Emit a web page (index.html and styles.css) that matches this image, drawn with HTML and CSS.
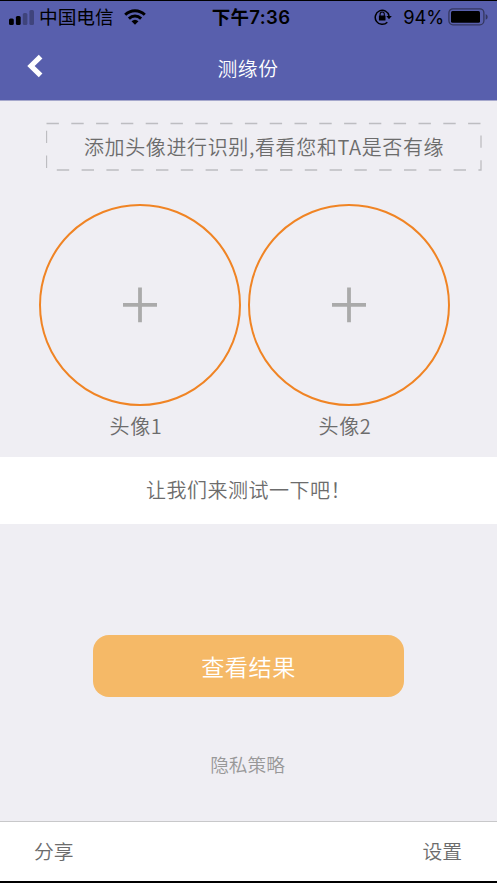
FILE: index.html
```html
<!DOCTYPE html>
<html lang="zh-CN">
<head>
<meta charset="utf-8">
<title>测缘份</title>
<link rel="stylesheet" href="styles.css">
</head>
<body>
<div class="screen">
  <header class="header">
    <div class="status">
      <div class="carrier">
        <svg class="signal" width="26" height="17" viewBox="0 0 26 17"><rect x="0" y="9.5" width="4.8" height="6.5" rx="1.5"/><rect x="6.9" y="7" width="4.8" height="9" rx="1.5"/><g opacity=".28"><rect x="13.8" y="4" width="4.6" height="12" rx="1.5"/><rect x="20.4" y="1" width="4.6" height="15" rx="1.5"/></g></svg>
        <span class="carrier-name">中国电信</span>
        <svg class="wifi" width="22" height="16" viewBox="0 0 22 16"><g fill="none" stroke="#000" stroke-width="2.9"><path d="M1.2 5.8C6.7.3 15.3.3 20.8 5.8"/><path d="M4.9 9.6C8.4 6.2 13.6 6.2 17.1 9.6"/></g><path d="M7.5 12.3Q11 9.2 14.5 12.3L11 15.8Z"/></svg>
      </div>
      <span class="time">下午7:36</span>
      <div class="power">
        <svg class="lock" width="18" height="18" viewBox="0 0 18 18"><path d="M13.3 14.2A7 7 0 1 1 15.1 8" fill="none" stroke="#000" stroke-width="1.5"/><path d="M12.3 7.9H17.8L15 11.2Z"/><rect x="4.9" y="7.5" width="6.6" height="5.1" rx=".6"/><path d="M6.1 8V6.1a2.1 2.1 0 0 1 4.2 0V8" fill="none" stroke="#000" stroke-width="1.1"/></svg>
        <span class="percent">94%</span>
        <svg class="battery" width="41" height="18" viewBox="0 0 41 18"><rect x=".9" y=".9" width="35" height="15.9" rx="4" fill="none" stroke="#34375f" stroke-width="1.3"/><rect x="3" y="3" width="29" height="11.8" rx="1.5"/><path d="M37.7 6.1Q39.7 7 39.7 8.9T37.7 11.7Z" fill="#34375f"/></svg>
      </div>
    </div>
    <nav class="nav">
      <svg class="back" width="16" height="24" viewBox="0 0 16 24"><path d="M13.6 2.6L4 12L13.6 21.4" fill="none" stroke="#fff" stroke-width="5.2"/></svg>
      <h1 class="title">测缘份</h1>
    </nav>
  </header>
  <main class="main">
    <div class="hint">
      <svg class="hint-frame" width="436" height="49" viewBox="0 0 436 49"><path d="M.5 1.5H435V48H.5Z" fill="none" stroke="#bdbdc1" stroke-width="1.3" stroke-dasharray="12.4 12.4"/></svg>
      <p class="hint-text">添加头像进行识别,看看您和TA是否有缘</p>
    </div>
    <div class="avatars">
      <div class="avatar">
        <div class="circle"><svg width="36" height="36" viewBox="0 0 36 36"><path d="M1 17.9H35M18 .5V35.3" stroke="#aaa" stroke-width="3.8"/></svg></div>
        <span class="label">头像1</span>
      </div>
      <div class="avatar">
        <div class="circle"><svg width="36" height="36" viewBox="0 0 36 36"><path d="M1 17.9H35M18 .5V35.3" stroke="#aaa" stroke-width="3.8"/></svg></div>
        <span class="label">头像2</span>
      </div>
    </div>
    <p class="message">让我们来测试一下吧！</p>
    <button class="submit">查看结果</button>
    <a class="privacy">隐私策略</a>
  </main>
  <footer class="toolbar"><span>分享</span><span>设置</span></footer>
</div>
</body>
</html>
```
FILE: styles.css
```css
* { box-sizing: border-box; margin: 0; padding: 0; }
body {
  background: #efeef3;
  color: #6c6c6c;
  font-family: "Noto Sans CJK SC", sans-serif;
  font-weight: 350;
}
svg { display: block; flex: none; }
.screen {
  width: 497px;
  height: 883px;
  display: flex;
  flex-direction: column;
  border-top: 1px solid #000;
  border-bottom: 2px solid #000;
  overflow: hidden;
}
.header { height: 100px; flex: none; background: #585fad; border-bottom: 1px solid #a6a8cc; }
.status {
  height: 32px;
  display: grid;
  grid-template-columns: 1fr auto 1fr;
  align-items: center;
  padding: 0 8px 0 9px;
  color: #000;
  line-height: 32px;
}
.carrier, .power { display: flex; align-items: center; }
.power { justify-content: flex-end; }
.carrier-name { margin: -2px 0 0 4px; font-size: 18.7px; font-weight: 400; }
.wifi { margin-left: 10px; }
.time { margin: 0 -2px 0 2px; font-family: Inter, "Noto Sans CJK SC", sans-serif; font-size: 18.5px; font-weight: 600; letter-spacing: .35px; }
.percent { margin: 0 4px 0 11px; font-family: Inter, sans-serif; font-size: 18.3px; font-weight: 400; letter-spacing: -.1px; }
.nav { height: 67px; display: grid; grid-template-columns: 1fr auto 1fr; align-items: center; padding-left: 27px; }
.back { margin-bottom: 1px; }
.title { font-size: 19.8px; font-weight: 350; letter-spacing: .5px; line-height: 30px; color: #fff; margin: 2px 0 0 -28px; }
.main { flex: 1; display: flex; flex-direction: column; }
.hint { position: relative; width: 436px; height: 49px; margin: 21px 0 0 46px; }
.hint-frame { position: absolute; inset: 0; }
.hint-text { padding-left: 38px; font-size: 20px; line-height: 49px; letter-spacing: .62px; white-space: nowrap; }
.avatars { display: flex; gap: 7px; margin: 33px 0 0 39px; }
.avatar { width: 202px; display: flex; flex-direction: column; align-items: center; }
.circle {
  width: 202px;
  height: 202px;
  border: 2px solid #f08424;
  border-radius: 50%;
  display: flex;
  align-items: center;
  justify-content: center;
}
.label { margin: 5px 8px 0 0; font-size: 20px; line-height: 30px; letter-spacing: .6px; }
.message { height: 67px; margin-top: 16px; background: #fff; padding-left: 146px; font-size: 20px; line-height: 65px; letter-spacing: .5px; }
.submit {
  width: 311px;
  height: 62px;
  margin: 111px 0 0 93px;
  border: 0;
  border-radius: 16px;
  background: #f5b967;
  color: #fff;
  font: 350 23.2px/60px "Noto Sans CJK SC", sans-serif;
  letter-spacing: .5px;
}
.privacy { margin: 52px 2px 0 0; text-align: center; font-size: 18.7px; line-height: 30px; color: #989898; }
.toolbar {
  height: 60px;
  flex: none;
  display: flex;
  justify-content: space-between;
  padding: 0 35px 0 34px;
  background: #fff;
  border-top: 1px solid #c8c8ca;
  font-size: 19.8px;
  line-height: 58px;
}
```
